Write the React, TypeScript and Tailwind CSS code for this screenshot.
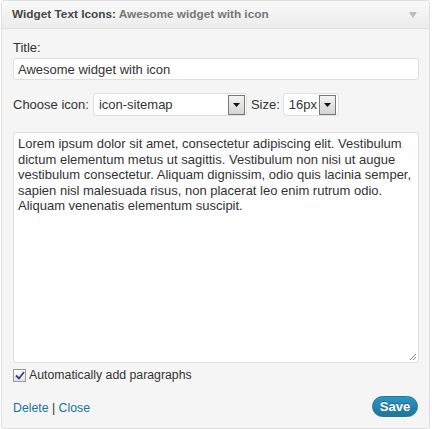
import React from "react"

const lorem =
  "Lorem ipsum dolor sit amet, consectetur adipiscing elit. Vestibulum dictum elementum metus ut sagittis. Vestibulum non nisi ut augue vestibulum consectetur. Aliquam dignissim, odio quis lacinia semper, sapien nisl malesuada risus, non placerat leo enim rutrum odio. Aliquam venenatis elementum suscipit."

const SelectArrow = () => (
  <span className="flex h-[20px] w-[17px] items-center justify-center border border-[#777] bg-gradient-to-b from-[#f3f3f3] to-[#d4d4d4]">
    <svg width="7" height="4" viewBox="0 0 7 4">
      <path d="M0 0h7L3.5 4z" fill="#111" />
    </svg>
  </span>
)

const App = () => {
  return (
    <div className="h-[429px] w-[432px] bg-white px-px pt-0 font-['Liberation_Sans',Arial,sans-serif] text-[13px] text-[#333]">
      <div className="h-[429px] w-[429px] overflow-hidden rounded-[3px] border border-[#dfdfdf] bg-[#f5f5f5]">
        {/* Header */}
        <div className="flex h-[28px] items-center justify-between border-b border-[#dfdfdf] bg-gradient-to-b from-[#f9f9f9] to-[#ececec] pl-[10px] pr-[12px]">
          <h4 className="text-[11.8px] font-bold text-[#464646]">
            Widget Text Icons: <span className="text-[#777]">Awesome widget with icon</span>
          </h4>
          <svg width="8" height="6" viewBox="0 0 8 6">
            <path d="M0 0h8L4 6z" fill="#bbb" />
          </svg>
        </div>

        {/* Body */}
        <div className="px-[11px]">
          <label className="mt-[11px] block leading-[15px]">Title:</label>
          <input
            defaultValue="Awesome widget with icon"
            className="mt-[3px] h-[22px] w-[406px] rounded-[3px] border border-[#dfdfdf] bg-white px-[4px] text-[13px] text-[#333] outline-none"
          />

          <div className="mt-[13px] flex items-center">
            <span>Choose icon:</span>
            <div className="ml-[4px] flex h-[23px] w-[154px] items-center justify-between rounded-[3px] border border-[#dfdfdf] bg-white pl-[5px] pr-[1px]">
              <span>icon-sitemap</span>
              <SelectArrow />
            </div>
            <span className="ml-[4px]">Size:</span>
            <div className="ml-[3px] flex h-[23px] w-[56px] items-center justify-between rounded-[3px] border border-[#dfdfdf] bg-white pl-[5px] pr-[2px]">
              <span>16px</span>
              <SelectArrow />
            </div>
          </div>

          <div className="relative mt-[16px] h-[231px] w-[406px] rounded-[3px] border border-[#dfdfdf] bg-white px-[4px] pt-[3px] leading-[15.6px]">
            {lorem}
            <svg className="absolute bottom-[1px] right-[1px]" width="8" height="8" viewBox="0 0 8 8">
              <path d="M7 1L1 7M7 4L4 7" stroke="#888" strokeWidth="1" />
            </svg>
          </div>

          <label className="mt-[5px] flex h-[14px] items-center text-[12.3px]">
            <span className="flex h-[13px] w-[13px] items-center justify-center border border-[#999] bg-gradient-to-b from-[#fff] to-[#e4e4e4]">
              <svg width="10" height="9" viewBox="0 0 10 9">
                <path d="M1 4.5l3 3L9 1" stroke="#2c3e8c" strokeWidth="1.8" fill="none" />
              </svg>
            </span>
            <span className="ml-[3px]">Automatically add paragraphs</span>
          </label>

          <div className="mt-[14px] flex items-center justify-between">
            <div className="pt-[3px] text-[12.3px]">
              <a className="text-[#21759b]">Delete</a> | <a className="text-[#21759b]">Close</a>
            </div>
            <button className="flex h-[21px] w-[46px] items-center justify-center rounded-full border border-[#21759b] bg-gradient-to-b from-[#2a95c5] to-[#21759b] text-[13px] font-bold text-white [text-shadow:0_-1px_0_rgba(0,0,0,0.3)]">
              Save
            </button>
          </div>
        </div>
      </div>
    </div>
  )
}

export default App
